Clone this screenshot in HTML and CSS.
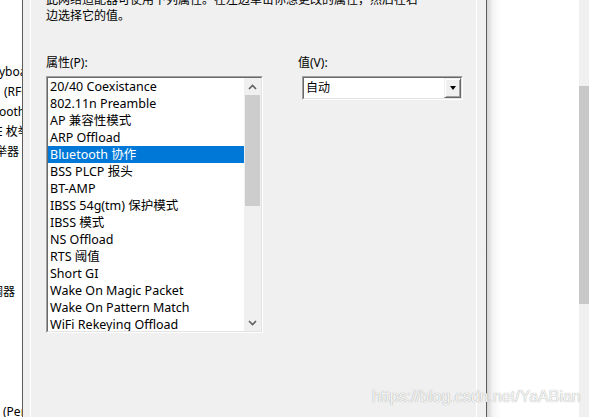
FILE: index.html
```html
<!DOCTYPE html>
<html lang="zh-CN">
<head>
    <meta charset="UTF-8">
    <title>高级属性</title>
    <link rel="stylesheet" href="styles.css">
</head>
<body>
    <div class="screen">
        <div class="tree">
            <div class="tree-row"><span class="t-keyb">yboards</span></div>
            <div class="tree-row"><span class="t-rf">(RFCOMM 协议 TDI)</span></div>
            <div class="tree-row"><span class="t-bt">ooth 设备</span></div>
            <div class="tree-row"><span class="t-enum">E 枚举器</span></div>
            <div class="tree-row"><span class="t-enum2">举器</span></div>
            <div class="tree-row"></div>
            <div class="tree-row"></div>
            <div class="tree-row"></div>
            <div class="tree-row"></div>
            <div class="tree-row"></div>
            <div class="tree-row"></div>
            <div class="tree-row"><span class="t-modem">调器</span></div>
            <div class="tree-row"></div>
            <div class="tree-row"></div>
            <div class="tree-row"></div>
            <div class="tree-row"></div>
            <div class="tree-row"></div>
            <div class="tree-row"><span class="t-pe">(Performance)</span></div>
        </div>

        <div class="dialog">
            <div class="page">
                <div class="intro">此网络适配器可使用下列属性。在左边单击你想更改的属性，然后在右<br>边选择它的值。</div>

                <div class="fields">
                    <div class="prop-group">
                        <div class="field-label">属性(P):</div>
                        <div class="listbox">
                            <div class="listbox-inner">
                                <div class="items">
                                    <div class="item">20/40 Coexistance</div>
                                    <div class="item">802.11n Preamble</div>
                                    <div class="item">AP 兼容性模式</div>
                                    <div class="item">ARP Offload</div>
                                    <div class="item selected">Bluetooth 协作</div>
                                    <div class="item">BSS PLCP 报头</div>
                                    <div class="item">BT-AMP</div>
                                    <div class="item">IBSS 54g(tm) 保护模式</div>
                                    <div class="item">IBSS 模式</div>
                                    <div class="item">NS Offload</div>
                                    <div class="item">RTS 阈值</div>
                                    <div class="item">Short GI</div>
                                    <div class="item">Wake On Magic Packet</div>
                                    <div class="item">Wake On Pattern Match</div>
                                    <div class="item">WiFi Rekeying Offload</div>
                                </div>
                                <div class="list-scroll">
                                    <div class="arrow-btn">
                                        <svg width="9" height="6" viewBox="0 0 9 6"><polyline points="1,5 4.5,1.5 8,5" fill="none" stroke="#606060" stroke-width="1.6"/></svg>
                                    </div>
                                    <div class="list-thumb"></div>
                                    <div class="arrow-btn">
                                        <svg width="9" height="6" viewBox="0 0 9 6"><polyline points="1,1 4.5,4.5 8,1" fill="none" stroke="#606060" stroke-width="1.6"/></svg>
                                    </div>
                                </div>
                            </div>
                        </div>
                    </div>

                    <div class="value-group">
                        <div class="field-label">值(V):</div>
                        <div class="combo">
                            <div class="combo-inner">
                                <div class="combo-text">自动</div>
                                <div class="combo-btn"><span class="tri"></span></div>
                            </div>
                        </div>
                    </div>
                </div>
            </div>
        </div>

        <div class="outside"></div>

        <div class="vscroll">
            <div class="vscroll-thumb"></div>
        </div>

        <div class="watermark">https://blog.csdn.net/YaABian</div>
    </div>
</body>
</html>
```

FILE: styles.css
```css
body {
    margin: 0;
    background: #ffffff;
    color: #000000;
    font-family: "Noto Sans", "Noto Sans CJK SC", sans-serif;
    font-size: 12px;
}

.screen {
    position: relative;
    display: flex;
    width: 589px;
    height: 417px;
    overflow: hidden;
}

/* device tree behind the dialog, cut off on the left */
.tree {
    width: 22px;
    flex: none;
    overflow: hidden;
    padding-top: 62px;
    box-sizing: border-box;
}

.tree-row {
    height: 20px;
    line-height: 20px;
    white-space: nowrap;
}

.t-keyb { margin-left: -1px; }
.t-rf { margin-left: 4px; }
.t-bt { margin-left: -1px; }
.t-enum { margin-left: -4px; }
.t-enum2 { margin-left: -5px; }
.t-modem { margin-left: -9px; }
.t-pe { margin-left: 3px; }

/* dialog frame */
.dialog {
    width: 465px;
    flex: none;
    display: flex;
    box-sizing: border-box;
    background: #f0f0f0;
    border-left: 1px solid #5c5c5c;
    border-right: 1px solid #5c5c5c;
    padding-left: 7px;
    padding-right: 9px;
}

.page {
    flex: 1;
    border-left: 1px solid #ffffff;
    border-right: 1px solid #ffffff;
    padding-left: 15px;
}

.intro {
    margin-top: -8px;
    line-height: 16px;
    white-space: nowrap;
}

.fields {
    display: flex;
    gap: 35px;
    margin-top: 31px;
}

.field-label {
    line-height: 16px;
    margin-bottom: 5px;
}

/* property list */
.listbox {
    width: 217px;
    height: 257px;
    box-sizing: border-box;
    border: 1px solid;
    border-color: #a0a0a0 #ffffff #ffffff #a0a0a0;
}

.listbox-inner {
    display: flex;
    height: 100%;
    box-sizing: border-box;
    border: 1px solid;
    border-color: #696969 #e3e3e3 #e3e3e3 #696969;
    background: #ffffff;
}

.items {
    flex: 1;
    overflow: hidden;
}

.item {
    height: 17px;
    line-height: 17px;
    padding-left: 2px;
    font-size: 12.5px;
    white-space: nowrap;
}

.item.selected {
    background: #0078d7;
    color: #ffffff;
}

.list-scroll {
    width: 17px;
    flex: none;
    display: flex;
    flex-direction: column;
    justify-content: space-between;
    background: #f0f0f0;
}

.arrow-btn {
    height: 17px;
    display: flex;
    align-items: center;
    justify-content: center;
}

.list-thumb {
    height: 111px;
    margin: 0 1px;
    background: #cdcdcd;
    margin-bottom: auto;
}

/* value combo */
.combo {
    width: 161px;
    height: 24px;
    margin-left: 4px;
    box-sizing: border-box;
    border: 1px solid;
    border-color: #a0a0a0 #ffffff #ffffff #a0a0a0;
}

.combo-inner {
    display: flex;
    height: 100%;
    box-sizing: border-box;
    border: 1px solid;
    border-color: #696969 #e3e3e3 #e3e3e3 #696969;
    background: #ffffff;
}

.combo-text {
    flex: 1;
    padding-left: 2px;
    line-height: 20px;
}

.combo-btn {
    width: 17px;
    box-sizing: border-box;
    display: flex;
    align-items: center;
    justify-content: center;
    background: #f0f0f0;
    border: 1px solid;
    border-color: #f0f0f0 #696969 #696969 #f0f0f0;
    box-shadow: inset 1px 1px #ffffff, inset -1px -1px #a0a0a0;
}

.tri {
    width: 0;
    height: 0;
    border-left: 3.5px solid transparent;
    border-right: 3.5px solid transparent;
    border-top: 4px solid #000000;
}

/* window behind, on the right */
.outside {
    flex: 1;
    background: linear-gradient(to right, #d4d4d4, #f4f4f4 6px, #ffffff 14px);
}

.vscroll {
    width: 10px;
    flex: none;
    background: #f0f0f0;
}

.vscroll-thumb {
    margin-top: 86px;
    height: 218px;
    background: #c8c8c8;
}

.watermark {
    position: absolute;
    left: 372px;
    top: 388px;
    font-family: "Liberation Sans", Arial, sans-serif;
    font-size: 16px;
    color: #f6f6f6;
    text-shadow: 0 0 1px #8c8c8c;
    white-space: nowrap;
}
```
